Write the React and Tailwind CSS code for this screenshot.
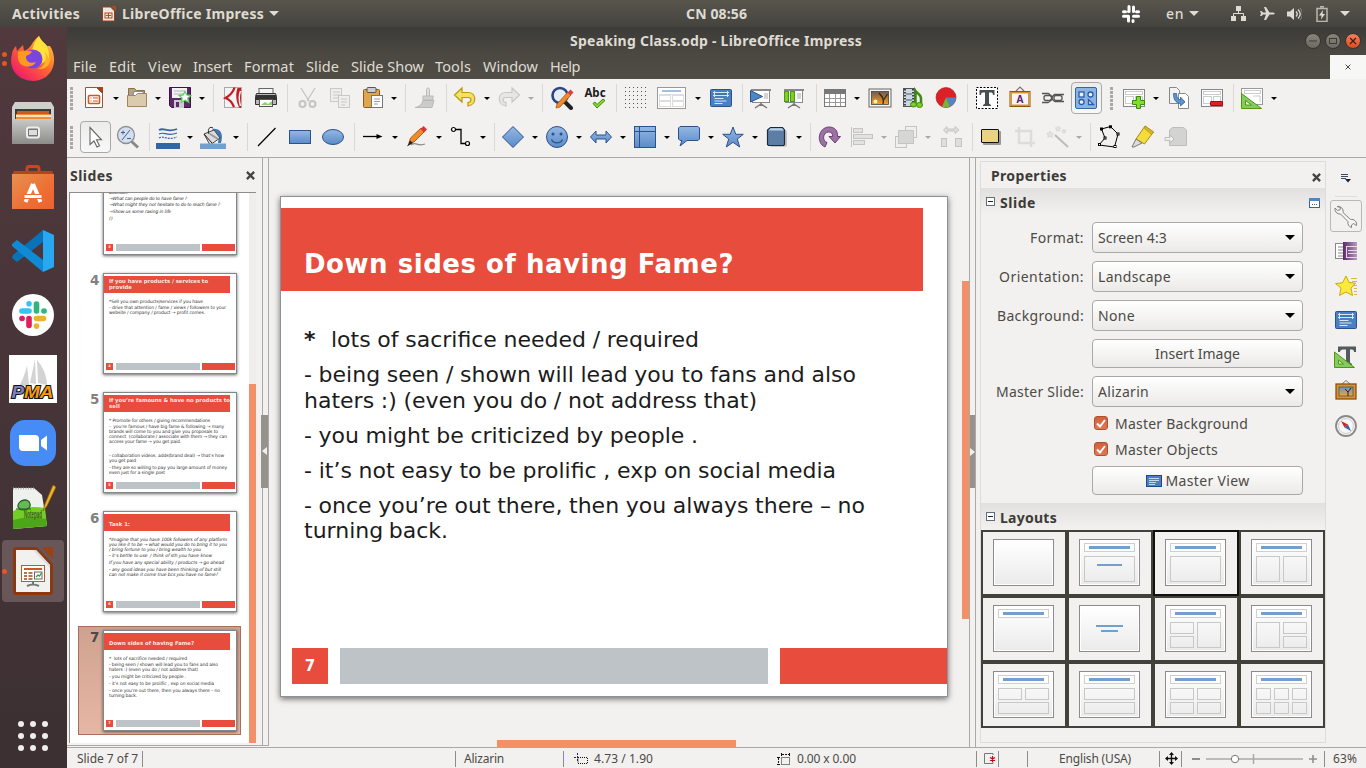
import React, { useLayoutEffect, useRef } from 'react';

/* Text run that fills a given width, by tracking or (with `words`) by word gaps. */
function T({ w, words, children, className = '' }) {
  const ref = useRef(null);
  useLayoutEffect(() => {
    const el = ref.current;
    el.style.letterSpacing = '';
    el.style.wordSpacing = '';
    const natural = el.getBoundingClientRect().width;
    const text = el.textContent;
    if (words) el.style.wordSpacing = (w - natural) / Math.max(1, text.split(' ').length - 1) + 'px';
    else el.style.letterSpacing = (w - natural) / text.length + 'px';
  }, [w, words, children]);
  return <span ref={ref} className={'inline-block shrink-0 whitespace-pre ' + className}>{children}</span>;
}

const Svg = ({ children, className = 'size-6', vb = '0 0 24 24' }) => (
  <svg viewBox={vb} className={'block shrink-0 ' + className} fill="none">{children}</svg>
);

const Tri = ({ className = '' }) => (
  <svg viewBox="0 0 10 5" className={'block shrink-0 ' + className}><path d="M0 0h10L5 5z" fill="currentColor" /></svg>
);

const blue = 'url(#gBlue)';
const bs = '#2a528c';

const icons = {
  doc: <><path d="M3.500 1.500h11l6 6v14h-17z" fill="#fff" stroke="#8a5a3c" /><path d="M14 1h7v7z" fill="#a2451b" /><rect x="6.500" y="9.500" width="11" height="8" rx="1" fill="#fff" stroke="#d2571b" strokeWidth="1.600" /><path d="M8.500 12h1M8.500 15h1M11 12h5M11 15h5" stroke="#d2571b" strokeWidth="1.200" /></>,
  folder: <><path d="M3.500 20V2.500h6l2 2h8V20z" fill="#b5a184" stroke="#85714f" /><path d="M9 5.500h9v8H7z" fill="#fff" stroke="#777" strokeWidth=".8" /><path d="M2.500 9.500h8l2-2h9v13h-19z" fill="#dccbab" stroke="#9c8761" /></>,
  save: <><path d="M1.500 1.500h21v20h-19l-2-2z" fill="#5c2a68" stroke="#3b1446" /><rect x="4" y="2" width="15" height="10" fill="#f2f2f2" /><path d="M6 5h11M6 8h11" stroke="#b5b5b5" /><rect x="6" y="14" width="10" height="8" fill="#ccc" /><rect x="8" y="16" width="3" height="5" fill="#5c2a68" /><path d="M17 5.500l1.800 3.500 4 .5-3 2.800.9 4-3.700-2-3.700 2 .8-4-2.900-2.800 4-.5z" fill="#fff" stroke="#59d35a" strokeWidth="1.300" /></>,
  pdf: <><rect x="3.500" y="1.500" width="17" height="20" fill="#f3f3f3" stroke="#aaa" /><path d="M13.500 1.500C12 7 8 10 4.500 12c4 1.500 7 5 8.500 9" stroke="#c9191e" strokeWidth="2.200" /><path d="M16.500 2H20v20h-1.500c-3-5-4.500-13-2-20" fill="#c9191e" /><path d="M19.500 5c-1.500 4-1.500 10 0 15" stroke="#f3f3f3" strokeWidth="1.500" /></>,
  print: <><rect x="5" y="2.500" width="14" height="7" fill="#f5f5f5" stroke="#666" /><path d="M2.500 7.500h19l1 3v8h-21v-8z" fill="#b8b8b8" stroke="#333" /><rect x="2" y="9" width="20" height="5" fill="#333" /><rect x="5.500" y="13.500" width="13" height="7" fill="#fff" stroke="#555" /><path d="M7 19l4-3 3 2 4-3v4z" fill="#8bcf6b" /></>,
  cut: <g stroke="#c4c4c3" strokeWidth="1.300"><path d="M5 2l8 13M19 2l-8 13" /><circle cx="6.500" cy="18" r="3" strokeWidth="2" /><circle cx="16.500" cy="18" r="3" strokeWidth="2" /></g>,
  copy: <g fill="#efeeed" stroke="#c8c8c6"><rect x="2.500" y="2.500" width="11" height="13" /><path d="M5 6h7M5 9h7M5 12h5" /><rect x="10.500" y="9.500" width="11" height="12" /><path d="M13 13h6M13 16h6M13 19h4" /></g>,
  paste: <><rect x="2.500" y="3.500" width="16" height="18" rx="1" fill="#e0a64e" stroke="#8b5c1f" /><rect x="6" y="1.500" width="9" height="5" rx="1" fill="#ccc" stroke="#555" /><rect x="10.500" y="9.500" width="11" height="12" fill="#fff" stroke="#777" /><path d="M13 13h6M13 15.500h6M13 18h4" stroke="#999" /></>,
  brush: <><path d="M13.500 10V3.500c0-2 3-2 3 0V10" fill="#ddd" stroke="#bbb" /><rect x="10" y="10" width="10" height="4" fill="#d0d0d0" stroke="#bbb" /><path d="M10 14.500c-1 4-4 6.500-8 7h17l2-7z" fill="#cbcbca" stroke="#b9b9b8" /></>,
  undo: <path d="M1.500 9l7.500-7v4.500h6c9 0 9 12.500 0 13.500v-3.500c4-1 4-5 0-5H9v4.500z" fill="#f6e063" stroke="#bb9a12" strokeWidth="1.200" />,
  redo: <path d="M22.500 9l-7.500-7v4.500H9c-9 0-9 12.500 0 13.500v-3.500c-4-1-4-5 0-5h6v4.500z" fill="#e6e6e5" stroke="#c8c8c6" strokeWidth="1.200" />,
  find: <><path d="M14 15l7 7" stroke="#222" strokeWidth="4" strokeLinecap="round" /><circle cx="10" cy="9.500" r="7.500" fill="#e5ecf7" stroke="#2a4484" strokeWidth="2.600" /><path d="M6 22l1-4L18 6l3 3-11 12z" fill="#ef8b2b" stroke="#a8540e" strokeWidth=".8" /><path d="M17.500 6.500l3-3 3 3-3 3z" fill="#e33c3c" /></>,
  abc: <><text x="12" y="10.500" fontSize="11.500" fontWeight="700" textAnchor="middle" fill="#1d1d1d" fontFamily="Noto Sans, sans-serif">Abc</text><path d="M10 17.500l2-1.500 2 2.500 6-5.500 2 1.500-8 7.500z" fill="#86d832" stroke="#3d8b0d" /></>,
  dots: <g fill="#555">{[2, 6, 10, 14, 18, 22].map((y) => [2, 6, 10, 14, 18, 22].map((x) => <rect key={x + '-' + y} x={x} y={y - 1} width="1" height="1" />))}</g>,
  master: <><rect x="1.500" y="3.500" width="21" height="17" rx="1" fill="#4a7fc1" stroke={bs} /><rect x="5.500" y="6" width="13" height="4" fill="#3f74b6" /><path d="M4 6.500h16M4 9.500h16M5.500 5v6M18.500 5v6M5.500 12.500h9M5.500 15h12M5.500 17.500h8" stroke="#d9e6f6" /></>,
  pres1: <><path d="M12 18l-6 4M12 18l6 4M12 16v4" stroke="#777" strokeWidth="1.500" /><rect x="3.500" y="4.500" width="17" height="12" fill="#fff" stroke="#888" /><path d="M2 4h20" stroke="#888" strokeWidth="2" /><path d="M15 8h4M15 10h4M15 12h4" stroke="#aaa" /><path d="M1.500 4.500l12 6-12 5.500z" fill="#4f86c6" stroke={bs} /></>,
  pres2: <><path d="M12 18l-6 4M12 18l6 4M12 16v4" stroke="#777" strokeWidth="1.500" /><rect x="3.500" y="4.500" width="17" height="12" fill="#fff" stroke="#888" /><path d="M2 4h20" stroke="#888" strokeWidth="2" /><path d="M15 8h4M15 10h4M15 12h4" stroke="#aaa" /><rect x="2.500" y="5.500" width="4" height="10" fill="#7dcf28" stroke="#4d9a06" /><rect x="8.500" y="5.500" width="4" height="10" fill="#7dcf28" stroke="#4d9a06" /></>,
  table: <><rect x="1.500" y="3.500" width="21" height="17" fill="#fff" stroke="#777" /><rect x="2" y="4" width="20" height="4" fill="#777" /><path d="M2 12.500h20M2 16.500h20M6.500 8v12M12.500 8v12M17.500 8v12" stroke="#999" /></>,
  image: <><rect x="1" y="3" width="22" height="18" fill="#f4f4f4" stroke="#666" /><rect x="3.500" y="5.500" width="17" height="13" fill="url(#gSun)" stroke="#444" strokeWidth=".8" /><path d="M15 18c1-4 0-5-1-8M15.500 14l4-6M15 12l-4-5" stroke="#3a2712" strokeWidth="1.300" /><circle cx="7.500" cy="15.500" r="2" fill="#fff3b0" /></>,
  media: <><rect x="2.500" y="2.500" width="11" height="18" fill="#cbd9e6" stroke="#555" /><path d="M4 3v17M12 3v17" stroke="#444" strokeWidth="2" strokeDasharray="1.500 1.500" /><path d="M5 8h6M5 14h6" stroke="#555" /><path d="M14.500 18V5c2 3 5 3 5.500 7v7" stroke="#3d8b0d" strokeWidth="2.500" /><ellipse cx="12.500" cy="18.500" rx="3" ry="2.500" fill="#7dcf28" stroke="#3d8b0d" /><ellipse cx="18.500" cy="19" rx="3" ry="2.500" fill="#7dcf28" stroke="#3d8b0d" /></>,
  chart: <><circle cx="12" cy="11.500" r="10" fill="#dd1f26" stroke="#a51217" strokeWidth=".6" /><path d="M12 11.500h10c0 4-3 8-6 9z" fill="#4f86c6" /><path d="M12 11.500l4 9c-3 1.300-6 1-8 0z" fill="#74b53a" /></>,
  textbox: <><rect x="1.500" y="1.500" width="21" height="21" fill="#fff" stroke="#000" strokeDasharray="2 1.500" /><path d="M4.500 4h15v5h-1.500c0-2-1-2.500-2.500-2.500h-1.500v11l2 1.500v1H8v-1l2-1.500v-11H8.500C7 6.500 6 7 6 9H4.500z" fill="#4a4f52" /></>,
  fontwork: <><path d="M8 5l4-4 4 4" stroke="#777" strokeWidth="1.200" /><rect x="2" y="5.500" width="20" height="15" fill="#f7f3f7" stroke="#8b5207" strokeWidth="1" /><rect x="3.200" y="6.700" width="17.600" height="12.600" stroke="#d69233" strokeWidth="1.500" /><text x="12" y="17" fontSize="10" fontWeight="700" textAnchor="middle" fill="#5c2a68" fontFamily="Noto Sans, sans-serif">A</text></>,
  link: <g stroke="#555" strokeWidth="1.300"><path d="M1 7.500h6c3 0 4 8 7 8h9M1 16.500h6c3 0 4-8 7-8h9" /><rect x="3" y="9.500" width="8" height="5" rx="2" /><rect x="13" y="9.500" width="8" height="5" rx="2" /></g>,
  shapes: <><rect x="1.500" y="1.500" width="21" height="21" rx="1.500" fill="#8cb4e2" stroke="#3465a4" /><g fill="#e8f1fb" stroke="#2a5ca8" strokeWidth="1.300"><rect x="5" y="6" width="5" height="5" /><circle cx="16.500" cy="8.500" r="2.500" /><circle cx="7.500" cy="16" r="2.500" /><path d="M14.500 13.500v5h5z" /></g></>,
  newslide: <><rect x="1.500" y="3.500" width="21" height="17" fill="#fff" stroke="#888" /><g stroke="#ccc"><rect x="3.500" y="5.500" width="17" height="3" /><rect x="3.500" y="10.500" width="8" height="7" /><rect x="13.500" y="10.500" width="7" height="7" /></g><path d="M14.500 10.500h4v4h4v4h-4v4h-4v-4h-4v-4h4z" fill="#7de02a" stroke="#3d8b0d" /></>,
  dup: <><path d="M2.500 1.500h7l3 3v13h-10z" fill="#f3f3f3" stroke="#888" /><path d="M11.500 7.500h7l3 3v12h-10z" fill="#fff" stroke="#888" /><path d="M6.500 7.500h3c0 4 1.500 6 4 6.500V11l4.500 5-4.500 4v-2.500c-5-.5-7-4-7-10z" fill="#5b93cf" stroke={bs} strokeWidth=".7" /></>,
  del: <><rect x="1.500" y="3.500" width="21" height="17" fill="#fff" stroke="#888" /><g stroke="#ccc"><rect x="3.500" y="5.500" width="17" height="3" /><rect x="3.500" y="10.500" width="8" height="7" /><rect x="13.500" y="10.500" width="7" height="5" /></g><rect x="10.500" y="15.500" width="12" height="4" rx=".5" fill="#dd1f26" stroke="#9c0f14" /></>,
  ruler: <><rect x="1.500" y="2.500" width="21" height="16" fill="#fff" stroke="#999" /><g stroke="#ccc"><rect x="4.500" y="4.500" width="16" height="3" /><path d="M13 10h7v6" /></g><path d="M1.500 7.500v15h20z" fill="#86c966" stroke="#4d9a06" /><path d="M5.500 14.500v4.500h6z" fill="#f2f1ef" stroke="#4d9a06" /></>,
  select: <path d="M7 2.500v17l4-3.500 3 6 2.500-1.200-3-6h5z" fill="#fff" stroke="#666" strokeWidth="1.100" />,
  zoom: <><path d="M15 16l7 6.500" stroke="#888" strokeWidth="3" /><circle cx="10" cy="10" r="8.500" fill="#d3dfef" stroke="#8b8f94" strokeWidth="1.300" /><path d="M5 7.500h4M7 5.500v4M14 5L6 15M11 13.500h4" stroke="#45648e" /></>,
  linecolor: <><path d="M3 5c5-3 8 3 18-1" stroke="#3465a4" strokeWidth="1.800" /><path d="M3 9c5-3 8 3 18-1" stroke="#3465a4" strokeWidth="1.200" /><path d="M3 13c5-3 8 3 18-1" stroke="#3465a4" strokeWidth="1.200" strokeDasharray="2 1" /><rect x="0" y="18" width="24" height="6" fill="#3465a4" /></>,
  fill: <><path d="M11 4c8-1 12 4 9 14h-3c1-6 1-9-6-14" fill="#3c78b8" /><path d="M3 9l10-4 6 8-10 7z" fill="#dcdcdc" stroke="#444" /><path d="M8 9c-2-5 1-8 4-6M3 9l8 9" stroke="#222" /><path d="M9 9l8 5" stroke="#999" strokeWidth="2" /><rect x="-1" y="18.500" width="26" height="5.500" fill="#729fcf" /></>,
  line: <path d="M3 21L20.500 3" stroke="#000" strokeWidth="1.200" />,
  rect: <rect x="1.500" y="5.500" width="21" height="13" fill={blue} stroke={bs} />,
  ellipse: <ellipse cx="12" cy="12" rx="10.500" ry="7.500" fill={blue} stroke={bs} />,
  arrowline: <><path d="M2 11.500h15" stroke="#000" strokeWidth="1.300" /><path d="M15.500 9l6 2.500-6 2.500z" fill="#000" /></>,
  pencil: <><path d="M6 20c5-4 6 2 14-1" stroke="#888" strokeWidth="1.300" /><path d="M4 18l1.500-5L16 3l3.500 3.500L9 17z" fill="#ef8b2b" stroke="#a8540e" strokeWidth=".9" /><path d="M15.500 4l3-3 3.500 3.500-3 3z" fill="#d33" /><path d="M2 21.500l3-6 3 2.500z" fill="#222" /></>,
  connector: <><path d="M7 4.500h5v14h4" stroke="#000" strokeWidth="1.300" /><circle cx="4.500" cy="4.500" r="2" fill="#fff" stroke="#000" strokeWidth="1.200" /><circle cx="18.500" cy="18.500" r="2" fill="#fff" stroke="#000" strokeWidth="1.200" /></>,
  diamond: <path d="M12 1.500L22.500 12 12 22.500 1.500 12z" fill={blue} stroke={bs} />,
  smile: <><circle cx="12" cy="12" r="10.500" fill={blue} stroke={bs} /><circle cx="8" cy="9" r="1.500" fill={bs} /><circle cx="16" cy="9" r="1.500" fill={bs} /><path d="M6.500 14.500c2 4.500 9 4.500 11 0" stroke={bs} strokeWidth="1.200" /></>,
  arrows: <path d="M1.500 12l5.500-6v4h10V6l5.500 6-5.500 6v-4H7v4z" fill={blue} stroke={bs} />,
  flow: <><rect x="1.500" y="1.500" width="21" height="21" fill={blue} stroke={bs} /><path d="M6.500 2v20M2 6.500h20" stroke={bs} /></>,
  callout: <path d="M3 1.500h18l1.500 1.500v11L21 15.500H10L3 21l2-5.500H3L1.500 14V3z" fill={blue} stroke={bs} />,
  star: <path d="M12 2l2.800 7.300h7.500l-6 4.700 2.400 8L12 17.300 5.300 22l2.400-8-6-4.700h7.500z" fill={blue} stroke={bs} />,
  cube: <><rect x="5" y="5" width="17" height="17" rx="2" fill="#c4c4c4" /><path d="M5.500 2.500h12l2 2.500v14.500l-1 1h-15l-1-1V5z" fill="#5c7ea4" stroke="#1b2a3c" strokeWidth="1.200" /><path d="M3.500 5.500l2-2.300h11.500l2 2.300z" fill="#b8d0ea" /></>,
  rotate: <path d="M8 22C-1 18 1 3 11.500 2 18 1.800 21 6 20.500 11.500h3L18 18l-6-6.500h3.500c.5-3-1.500-4.700-4-4.500C5.500 7.500 5 16 10 17.500z" fill="#9b72a3" stroke="#6b3f75" />,
  align: <g fill="#e2e2e1" stroke="#c4c4c2"><path d="M1.500 2v20" /><rect x="3.500" y="3.500" width="9" height="4" /><rect x="3.500" y="9.500" width="19" height="4" /><rect x="3.500" y="15.500" width="11" height="4" /></g>,
  arrange: <g fill="#f0efee" stroke="#c4c4c2"><rect x="11.500" y="1.500" width="11" height="11" /><rect x="1.500" y="11.500" width="11" height="11" /><rect x="4.500" y="5.500" width="15" height="13" fill="#d6d6d5" /></g>,
  dist: <g fill="#dededd" stroke="#c4c4c2"><rect x="2.500" y="13.500" width="5" height="8" /><rect x="16.500" y="13.500" width="6" height="8" /><path d="M4.500 5l3.500-3.500v2.500h8V1.500L20 5l-4 3.500V6H8v2.500z" /></g>,
  shadow: <><rect x="4" y="6" width="18" height="14" rx="1" fill="#999" /><rect x="2.500" y="4.500" width="17" height="13" rx=".5" fill="#e9d282" stroke="#111" /></>,
  crop: <g stroke="#dddcda" strokeWidth="2.500"><path d="M6 2v16h16M2 6h16v16" /></g>,
  wand: <><path d="M9 10l13 12" stroke="#bcbcba" strokeWidth="2" /><g fill="#e3e3e2" stroke="#d3d3d1" strokeWidth=".7"><path d="M4 6l1 2 2.500.4-1.700 1.700.4 2.400L4 11.300l-2.200 1.200.4-2.400L.5 8.400 3 8z" /><path d="M12 1l.8 1.700 2 .2-1.500 1.300.5 2-1.800-1-1.800 1 .5-2L9.200 3l2-.2zM18 4l.7 1.300 1.500.2-1 1 .2 1.500L18 7.300 16.600 8l.2-1.500-1-1 1.500-.2z" /></g></>,
  points: <><path d="M4.500 4l9-2.500 7.500 7.500-3.500 13L2 20l6-7z" stroke="#000" /><g fill="#fff" stroke="#000"><rect x="3.500" y="3" width="2" height="2" /><rect x="12.500" y=".8" width="2" height="2" /><rect x="20" y="8" width="2" height="2" /><rect x="17" y="20.500" width="2" height="2" /><rect x="1.500" y="18.500" width="2" height="2" /><rect x="7" y="12" width="2" height="2" /></g></>,
  glue: <><path d="M14 1l8.500 6-9 12-8.500-5z" fill="#f3dc3c" stroke="#a88b12" /><path d="M14 1l8.500 6-2 2.500-7-6z" fill="#d9b72a" stroke="#a88b12" strokeWidth=".7" /><path d="M5 14l6 4-8 4H1z" fill="#ddd" stroke="#777" /></>,
  toggle: <><path d="M5.500 5l3-2.500h11l3 2.500v15.500h-17z" fill="#d3d3d2" stroke="#bdbdbc" /><path d="M1 12.500h5V10l4 4-4 4v-2.500H1z" fill="#eee" stroke="#bdbdbc" /></>,
  wrench: <g transform="scale(-1 1) translate(-24 0)"><path d="M21 2.500a5 5 0 0 0-6 6L7.500 15.500a5 5 0 0 0-6 6l3-2 2 1.500v2.500a5 5 0 0 0 3.500-6L17.500 10a5 5 0 0 0 5.500-6l-2.500 2.500-2.500-.7-.5-2.300z" fill="#f5f5f4" stroke="#82817d" /></g>,
  trans: <><rect x="1.500" y="4.500" width="10" height="15" fill="#fff" stroke="#888" /><path d="M4 8h6M4 11h6M4 14h6M4 17h6" stroke="#888" /><rect x="9" y="3" width="14" height="18" fill="url(#gPurple)" /><path d="M12.500 7v11M12 7.500h11M14 11.500h9M14 14.500h9M12 18.500h11" stroke="#e7d8ea" /></>,
  anim: <><path d="M17 4.500h6M18 7.500h5M20 11.500h3M20 14.500h3M20 17.500h3M20 20.500h3" stroke="#d8b93c" strokeWidth="1.200" /><path d="M12 2l3 6.500 6.500.7-4.500 5 1.500 7.300-6.500-3.500-6.500 3.500 1.500-7.500L1.500 9.500l7-.7z" fill="#fbe93b" stroke="#c9a916" /></>,
  styles: <><path d="M4 1.500h18V7h-2c0-2-1-2.500-4-2.500v13l2 1.500v1h-8v-1l2-1.500v-13h-2C8 4.500 6 5 6 7H4z" fill="#555a5c" /><path d="M.5 7v15.500h20z" fill="#86c966" stroke="#4d9a06" /><path d="M4.500 15v4h5z" fill="#d9f0cc" stroke="#4d9a06" /></>,
  gallery: <><path d="M8 5l4-3.500L16 5" stroke="#777" /><rect x="2" y="5" width="20" height="15" fill="#d69233" stroke="#8b5207" strokeWidth="1.300" /><rect x="5" y="8" width="14" height="9" fill="url(#gSky)" stroke="#555" strokeWidth=".8" /><path d="M14 17v-4l3-4M14 13l-3-3" stroke="#2a2015" /></>,
  nav: <><circle cx="12" cy="12" r="10" fill="#f7f7f7" stroke="#888" strokeWidth="1.800" /><circle cx="12" cy="12" r="7.500" stroke="#ccc" /><path d="M7 7l7 3.500-3.500 3z" fill="#d22" /><path d="M17 17l-3-6.500-3.500 3z" fill="#3465a4" /></>,
};

const Sheet = () => (
  <svg viewBox="0 0 29 22" className="ml-[10px] block h-[22px] w-[29px] shrink-0">
    <rect x=".5" y=".5" width="28" height="21" fill="#fff" stroke="#999" />
    <path d="M5 4h19" stroke="#9fbfe3" strokeWidth="2" />
    <g fill="none" stroke="#ddd"><path d="M2 7.500h25" /><rect x="2.500" y="8.500" width="11" height="5" /><rect x="15.500" y="8.500" width="11" height="5" /><rect x="2.500" y="14.500" width="11" height="5" /><rect x="15.500" y="14.500" width="11" height="5" /></g>
  </svg>
);

function Item({ k, m }) {
  if (k === 'handle') return <div className={'h-[23px] w-[3px] mr-px shrink-0 bg-[repeating-linear-gradient(#aaa9a7_0_3px,transparent_3px_4px)] ' + m} />;
  if (k === '|') return <div className={'h-7 w-px shrink-0 bg-[#d9d8d6] ' + m} />;
  if (k === 'd' || k === 'dx') return <div className={'flex w-[18px] shrink-0 justify-center ' + m}><Tri className={'h-[3px] w-[6px] ' + (k === 'd' ? 'text-black' : 'text-[#aaa9a7]')} /></div>;
  if (k === 'sheet') return <Sheet />;
  if (k[0] === '!') return <div className={'flex h-8 w-[31px] shrink-0 items-center justify-center rounded-[4px] border-[1.500px] border-[#aaa9a7] bg-linear-to-b from-[#ececeb] to-[#f8f8f8] pr-px ' + m}><Svg>{icons[k.slice(1)]}</Svg></div>;
  return <Svg className={'size-6 ' + m}>{icons[k]}</Svg>;
}

const row1 = [
  ['handle', 'ml-[3px]'], ['doc', 'ml-[8px]'], ['d', 'ml-px'], ['folder', ''], ['d', ''], ['save', 'ml-px'], ['d', 'ml-px'], ['|', 'ml-[2px]'],
  ['pdf', 'ml-[7px]'], ['print', 'ml-[9px]'], ['|', 'ml-[9px]'], ['cut', 'ml-[8px]'], ['copy', 'ml-[8px]'], ['paste', 'ml-[9px]'], ['d', ''], ['|', 'ml-[2px]'],
  ['brush', 'ml-[7px]'], ['|', 'ml-[9px]'], ['undo', 'ml-[6px]'], ['d', 'ml-px'], ['redo', 'ml-px'], ['dx', 'ml-px'], ['|', 'ml-[2px]'],
  ['find', 'ml-[7px]'], ['abc', 'ml-[9px]'], ['|', 'ml-[9px]'], ['dots', 'ml-[6px]'], ['sheet', ''], ['d', 'ml-[3px]'], ['master', 'ml-[2px]'], ['|', 'ml-[9px]'],
  ['pres1', 'ml-[6px]'], ['pres2', 'ml-[9px]'], ['|', 'ml-[10px]'], ['table', 'ml-[6px]'], ['d', 'ml-px'], ['image', 'ml-[2px]'], ['media', 'ml-[9px]'], ['chart', 'ml-[9px]'], ['|', 'ml-[9px]'],
  ['textbox', 'ml-[7px]'], ['fontwork', 'ml-[9px]'], ['link', 'ml-[9px]'], ['!shapes', 'ml-[6px]'], ['handle', 'ml-[8px]'], ['newslide', 'ml-[8px]'], ['d', 'ml-px'],
  ['dup', 'ml-[2px]'], ['del', 'ml-[9px]'], ['|', 'ml-[9px]'], ['ruler', 'ml-[6px]'], ['d', 'ml-px'],
];
const row2 = [
  ['handle', 'ml-[3px]'], ['!select', 'ml-[6px]'], ['zoom', 'ml-[5px]'], ['|', 'ml-[9px]'], ['linecolor', 'ml-[6px]'], ['d', 'ml-px'], ['fill', 'ml-[2px] overflow-visible'], ['d', 'ml-[2px]'], ['|', 'ml-[2px]'],
  ['line', 'ml-[7px]'], ['rect', 'ml-[9px]'], ['ellipse', 'ml-[9px]'], ['|', 'ml-[9px]'], ['arrowline', 'ml-[6px]'], ['d', 'ml-px'], ['pencil', 'ml-px'], ['d', 'ml-px'], ['connector', 'ml-px'], ['d', 'ml-px'], ['|', 'ml-[2px]'],
  ['diamond', 'ml-[6px]'], ['d', 'ml-px'], ['smile', 'ml-px'], ['d', 'ml-px'], ['arrows', 'ml-px'], ['d', 'ml-px'], ['flow', 'ml-px'], ['d', 'ml-px'], ['callout', 'ml-px'], ['d', 'ml-px'], ['star', 'ml-px'], ['d', 'ml-px'], ['cube', 'ml-px'], ['d', 'ml-px'], ['|', 'ml-[2px]'],
  ['rotate', 'ml-[6px]'], ['align', 'ml-[9px]'], ['dx', 'ml-px'], ['arrange', 'ml-px'], ['dx', 'ml-px'], ['dist', 'ml-[2px]'], ['|', 'ml-[9px]'],
  ['shadow', 'ml-[6px]'], ['crop', 'ml-[10px]'], ['wand', 'ml-[9px]'], ['dx', ''], ['|', 'ml-[2px]'], ['points', 'ml-[6px]'], ['glue', 'ml-[10px]'], ['toggle', 'ml-[9px]'],
];

const Close = ({ className = 'size-[8px]', sw = 2 }) => (
  <svg viewBox="0 0 8 8" className={'block shrink-0 ' + className}><path d="M.8.8l6.400 6.400M7.200.8L.8 7.200" stroke="#45433f" strokeWidth={sw} /></svg>
);

/* ---------- top of the screen ---------- */
function TopBar() {
  return (
    <div className="flex h-[27px] items-center bg-linear-to-b from-[#58554d] to-[#44433e] text-[14px] font-bold text-[#dfdbd2]">
      <T w={68} className="ml-[12px]">Activities</T>
      <Svg className="ml-[21px] h-4 w-[15px]" vb="0 0 15 16"><path d="M1.500 1h8l4 4v10h-12z" fill="#f3e6df" stroke="#91401f" /><path d="M10 0h5v5z" fill="#b4481c" /><rect x="4" y="7" width="7" height="5" stroke="#b4481c" /><path d="M5 9.500h5M7.500 7v5" stroke="#b4481c" /></Svg>
      <T w={142} className="ml-[6px]">LibreOffice Impress</T>
      <Tri className="ml-[5px] h-[5px] w-[10px]" />
      <T w={61} className="ml-[407px]">CN 08:56</T>
      <Svg className="ml-[374px] size-5" vb="0 0 20 20"><g stroke="#fff" strokeWidth="3" strokeLinecap="round"><path d="M8 2.500v5M2.500 7.700h2M12.500 3v4.500M15.500 7.700h2M2.500 12.300h5M12.500 12.300h5M7.500 12.500V17M12 16.500v1M7.500 7.600h.1" /></g></Svg>
      <T w={18} className="ml-[25px] font-medium">en</T>
      <Tri className="ml-[5px] h-[5px] w-[10px]" />
      <Svg className="ml-[32px] size-[15px]" vb="0 0 15 15"><path d="M5 0h5v5H5zM0 10h5v5H0zM10 10h5v5h-5z" fill="#dfdbd2" /><path d="M7.500 5v3M2.500 10V7.500h10V10" stroke="#dfdbd2" /></Svg>
      <Svg className="ml-[14px] size-[15px]" vb="0 0 15 15"><path d="M15 7.500l-1.500 1H9.500L6 14H4l2-5.500H3L1.500 10H0l1-2.500L0 5h1.500L3 6.500h3L4 1h2l3.500 5.500h4z" fill="#dfdbd2" /></Svg>
      <Svg className="ml-[11px] size-4" vb="0 0 16 16"><path d="M1 5.500h3L8 2v12L4 10.500H1z" fill="#dfdbd2" /><path d="M10 5.500c1.500 1.500 1.500 3.500 0 5M12 3.500c3 3 3 6 0 9" stroke="#dfdbd2" strokeWidth="1.300" /><path d="M14 2c3 3 3 9 0 12" stroke="#8b8880" /></Svg>
      <Svg className="ml-[14px] h-4 w-3" vb="0 0 12 16"><path d="M4 .7h4M1 2.500h10v13H1z" stroke="#bcb8af" strokeWidth="1.500" /><path d="M7 4L3 9.500h2.500L5 13.500 9 8H6.500z" fill="#dfdbd2" /></Svg>
      <Tri className="ml-[12px] h-[5px] w-[10px]" />
    </div>
  );
}

function WinBtn({ children, close }) {
  return <div className={'flex size-4 items-center justify-center rounded-full border border-[#35342f] ' + (close ? 'bg-linear-to-b from-[#f2805c] to-[#df4a16]' : 'bg-linear-to-b from-[#888479] to-[#6c6a62]')}><Svg className="size-[14px]" vb="0 0 14 14">{children}</Svg></div>;
}

const menus = [['File', 24, 'ml-[6px]'], ['Edit', 27, 'ml-[12px]'], ['View', 34, 'ml-[12px]'], ['Insert', 39, 'ml-[11px]'], ['Format', 50, 'ml-[12px]'], ['Slide', 33, 'ml-[12px]'], ['Slide Show', 73, 'ml-[12px]'], ['Tools', 36, 'ml-[11px]'], ['Window', 55, 'ml-[12px]'], ['Help', 30, 'ml-[12px]']];

function TitleAndMenu() {
  return (
    <div className="flex h-[52px] flex-col bg-linear-to-b from-[#3c3b37] via-[#4b4842] to-[#504d46] text-[#dfdbd2]">
      <div className="flex h-[28px] items-center pb-px">
        <T w={292} className="ml-[503px] text-[14px] font-bold">Speaking Class.odp - LibreOffice Impress</T>
        <div className="ml-[443px] flex gap-1">
          <WinBtn><path d="M3 7h8" stroke="#3c3b37" /></WinBtn>
          <WinBtn><rect x="3.500" y="4.500" width="7" height="5" stroke="#3c3b37" /></WinBtn>
          <WinBtn close><path d="M4 4l6 6M10 4l-6 6" stroke="#3c2015" strokeWidth="1.300" /></WinBtn>
        </div>
      </div>
      <div className="flex h-[24px] items-center text-[14.500px]">
        {menus.map(([t, w, m]) => <T key={t} w={w} className={m}>{t}</T>)}
        <div className="ml-auto flex h-full w-9 items-center justify-center bg-[#f7f7f6]"><Close className="size-[6px]" sw={1.300} /></div>
      </div>
    </div>
  );
}

/* ---------- dock ---------- */
const Cell = ({ children, active }) => <div className={'flex size-[62px] shrink-0 items-center justify-center rounded-[4px] ' + (active ? 'bg-[#685659]' : '')}>{children}</div>;

function Dock() {
  return (
    <div className="relative flex w-[67px] shrink-0 flex-col items-start gap-[2px] bg-linear-to-b from-[#51393d] to-[#3c3033] pl-[2px] pt-px">
      <Cell><Svg className="-mt-[2px] size-[46px]" vb="0 0 46 46">
        <path d="M29 1c2 5 5 6 8 10l3 0c9 14 3 34-16 35C7 46-2 33 2 19c0-3 2-6 4-8l1 5 6-6 1 6c8-3 7-9 15-15z" fill="url(#gFox)" />
        <path d="M29 1c2 5 5 6 8 10 2 5 2 8 2 12l-10 8-7-15c1-6 3-10 7-15z" fill="#ffe13d" />
        <circle cx="23" cy="24" r="9.500" fill="#7a45df" /><path d="M8 17c5-3 10 0 14-1-1 4-6 4-6 6 0 5 5 7 10 5-4 7-16 6-18-3z" fill="#ff9a1f" />
        <path d="M34 14c4 9 1 18-6 20 9 1 14-6 12-15l-1 5z" fill="#ffb327" />
      </Svg></Cell>
      <Cell><Svg className="h-11 w-[42px]" vb="0 0 42 44"><path d="M3 1h36l3 5v37H0V6z" fill="#cfcfcd" /><rect x="3" y="8" width="36" height="12" fill="#3f3a37" /><path d="M5 10h32v3H5z" fill="#d2571b" /><path d="M4 13h35v6H4z" fill="#f08a3c" /><path d="M4 14h35v2H4z" fill="#fbe1bd" /><rect y="18" width="42" height="25" fill="url(#gGrey)" /><rect x="15" y="26.500" width="12" height="10" rx="2" stroke="#eee" strokeWidth="2" fill="#777" /><rect x="17" y="29" width="8" height="5" fill="#ddd" /></Svg></Cell>
      <Cell><Svg className="-mt-px h-11 w-[42px]" vb="0 0 42 44"><path d="M15 14V4q0-2.500 2-2.500h8q2 0 2 2.500v10" stroke="#c9471b" strokeWidth="3" /><path d="M2 6h38l2 4H0z" fill="#b2451f" /><rect y="9" width="42" height="35" fill="url(#gOrange)" /><path d="M21 19l-7.500 18M21 19l7.500 18" stroke="#fff" strokeWidth="4" /><rect x="12" y="29.500" width="18" height="4" fill="#fff" stroke="#ec6b32" /></Svg></Cell>
      <Cell><Svg className="size-[42px]" vb="0 0 42 42"><path d="M31 0l11 5v32l-11 5z" fill="#29a8f2" /><path d="M31 0v12L5 32l-5-4 1-3z" fill="#0a73b8" /><path d="M0 14l5-4 26 20v12L0 16z" fill="#118ad6" /></Svg></Cell>
      <Cell><Svg className="size-[42px]" vb="0 0 42 42"><circle cx="21" cy="21" r="21" fill="#fff" /><g strokeWidth="5.600" strokeLinecap="round"><path d="M10 17h7" stroke="#36c5f0" /><path d="M17 9.700v.1" stroke="#36c5f0" /><path d="M24.500 10v7" stroke="#2eb67d" /><path d="M32 17h.1" stroke="#2eb67d" /><path d="M24.500 24.500h7" stroke="#ecb22e" /><path d="M24.500 32v.1" stroke="#ecb22e" /><path d="M17 24.500v7" stroke="#e01e5a" /><path d="M10 24.500h.1" stroke="#e01e5a" /></g></Svg></Cell>
      <Cell><Svg className="size-12" vb="0 0 48 48"><rect width="48" height="48" fill="#fff" /><path d="M9 32c4-4 8-16 9-22l2 20zM21 28l5-24 1 25zM28 5c6 7 10 16 10 25l-9-2z" fill="#d3d3d3" /><text x="2.500" y="43" fontSize="17" fontStyle="italic" fontWeight="700" fontFamily="Liberation Sans, sans-serif" stroke="#111" strokeWidth="2" paintOrder="stroke" textLength="42" lengthAdjust="spacingAndGlyphs"><tspan fill="#7a81bd">P</tspan><tspan fill="#f59c0b">MA</tspan></text></Svg></Cell>
      <Cell><Svg className="size-[46px]" vb="0 0 46 46"><rect width="46" height="46" rx="15" fill="#478cf6" /><path d="M9 15h16q4 0 4 4v12H13q-4 0-4-4zM31 20l6-4.500v15L31 26z" fill="#fff" /></Svg></Cell>
      <Cell><Svg className="h-[46px] w-[46px]" vb="0 0 46 46"><path d="M3 4h21l8 7 5 31-34 3z" fill="#eef1ec" /><path d="M3 27q14-6 32-3l2 18-34 3z" fill="#74cc28" /><path d="M3 36q17-5 33-1l1 7-34 3z" fill="#318d0e" opacity=".6" /><path d="M3 4.500h21" stroke="#aaa" strokeWidth="2" strokeDasharray="1 1.500" /><path d="M8 23c-1-7 11-10 12-3 1 6-9 8-12 3" stroke="#265f24" strokeWidth="1.300" fill="#66b953" /><path d="M6 25h15" stroke="#265f24" /><text x="14" y="34" fontSize="10" fontWeight="700" fill="#3d5e20" fontFamily="Liberation Sans, sans-serif" textLength="18" lengthAdjust="spacingAndGlyphs">Notepad</text><path d="M33 27l2-7L43 1l3 2-9 19z" fill="#f0b323" stroke="#8a5a10" strokeWidth=".7" /></Svg></Cell>
      <Cell active><Svg className="h-12 w-10" vb="0 0 40 48"><path d="M3 0h21l16 17v28q0 3-3 3H3q-3 0-3-3V3q0-3 3-3z" fill="#8b3a10" /><path d="M28 0h12v12z" fill="#9c4212" /><path d="M3 3h20l14 15v27H3z" fill="#f1f1ef" /><path d="M23 3l14 15v3L20 3z" fill="#ddd" /><rect x="8.500" y="18.500" width="23" height="16" fill="#fff" stroke="#c25a20" /><path d="M11 22h18" stroke="#d2571b" strokeWidth="2" /><path d="M11 26h3M11 29h3M11 32h3M15.500 26h4M15.500 29h4M15.500 32h4" stroke="#a2451b" strokeWidth="1.700" /><rect x="21.500" y="25" width="7.500" height="7" fill="#fff" stroke="#666" /><path d="M23 30l2-2 1.500 1 2-3" stroke="#3a9a3a" strokeWidth="1.300" /><path d="M20 35v3M14 39q6-3 12 0" stroke="#777" strokeWidth="2" /></Svg></Cell>
      <div className="mt-auto mb-[17px] ml-[16px] grid grid-cols-3 gap-[6px]">
        {Array.from({ length: 9 }, (_, i) => <span key={i} className="size-[6px] rounded-full bg-[#eeeeec]" />)}
      </div>
      <span className="absolute top-[25px] left-[2px] size-[5px] rounded-full bg-[#e95420]" />
      <span className="absolute top-[34px] left-[2px] size-[5px] rounded-full bg-[#e95420]" />
      <span className="absolute top-[542px] left-[2px] size-[5px] rounded-full bg-[#e95420]" />
    </div>
  );
}

/* ---------- slide list ---------- */
const slides = [
  { n: 3, it: true, title: [], body: [['attention.', 19, 39.700], ['→What can people do to have fame ?', 78, 45.300], ['→What might they not hesitate to do to reach fame ?', 111, 51.700], ['→Show us some rasing in life', 62, 58.300], ['()', 4, 65]] },
  { n: 4, title: [['If you have products / services to', 99, 9], ['provide', 23, 15]], body: [['*Sell you own products/services if you have', 94, 29.500], ['- drive that attention / fame / views / followers to your', 117, 35.300], ['website / company / product → profit comes.', 96, 40.700]] },
  { n: 5, title: [['If you’re famouns & have no products to', 121, 9], ['sell', 11, 15.300]], body: [['* Promote for others / giving recommendations', 101, 29.300], ['-  you’re famous / have big fame & following → many', 115, 35.300], ['brands will come to you and give you proposals to', 109, 40.700], ['connect  (collaborate / associate with them → they can', 118, 45.500], ['access your fame → you get paid.', 72, 50.500], ['- collaboration videos, adds(brand deal) → that’s how', 115, 64.700], ['you get paid', 27, 69.800], ['- they are so willing to pay you large amount of money', 118, 76.700], ['even just for a single post', 56, 81.700]] },
  { n: 6, it: true, title: [['Task 1:', 21, 14]], body: [['*Imagine that you have 100k followers of any platform', 118, 29.300], ['you like it to be → what would you do to bring it to you', 118, 34.500], ['/ bring fortune to you / bring wealth to you', 92, 39.700], ['- it’s bettle to use  / think of sth you have know', 103, 45.300], ['If you have any special ability / products → go ahead', 115, 52.300], ['- any good ideas you have been thinking of but still', 112, 59.300], ['can not make it come true bcs you have no fame?', 109, 64.700]] },
  { n: 7, title: [['Down sides of having Fame?', 85, 14]], body: [['*  lots of sacrifice needed / required', 78, 29.300], ['- being seen / shown will lead you to fans and also', 109, 35.500], ['haters :) (even you do / not address that)', 89, 40.700], ['- you might be criticized by people .', 77, 47.300], ['- it’s not easy to be prolific , exp on social media', 105, 54.300], ['- once you’re out there, then you always there – no', 111, 61.300], ['turning back.', 28, 66.700]] },
];

/* Stacks lines so that each one is centred on its own y. */
function Lines({ rows, top, className }) {
  let prev = top;
  return rows.map(([t, w, c], i) => {
    const mt = c - 2.5 - prev;
    prev = c + 2.5;
    return <div key={i} className={'flex h-[5px] items-center ' + className} style={{ marginTop: mt }}><T w={w}>{t}</T></div>;
  });
}

function Thumb({ s }) {
  return (
    <div className="flex h-[101px] w-[134px] flex-col border border-[#84878a] bg-white shadow-[0_1px_3px_rgba(0,0,0,0.6)]">
      <div className="mt-[2px] h-[17px] w-[126px] shrink-0 bg-[#e74c3c] pl-[5px]"><Lines rows={s.title} top={3} className="text-[5.300px] font-bold text-[#fde9e6]" /></div>
      <div className="h-[70px] shrink-0 pl-[5px]"><Lines rows={s.body} top={20} className={'text-[4.500px] text-[#333] ' + (s.it ? 'italic' : '')} /></div>
      <div className="flex h-[7px] shrink-0 gap-[2px] px-px pl-[2px]">
        <div className="flex w-[7px] items-center justify-center bg-[#e74c3c] text-[3.500px] font-bold text-white">{s.n}</div>
        <div className="ml-px w-[84px] bg-[#bdc3c7]" />
        <div className="flex-1 bg-[#e74c3c]" />
      </div>
    </div>
  );
}

function SlidePane() {
  return (
    <div className="flex w-[202px] shrink-0 flex-col">
      <div className="flex h-[589px] border-t border-r border-b border-[#aaa9a7]">
        <div className="flex w-[196px] shrink-0 flex-col border-r border-[#aaa9a7]">
          <div className="flex h-[34px] items-center pl-[3px]">
            <T w={43} className="text-[14px] font-bold text-[#3c3b37]">Slides</T>
            <Close className="ml-auto mr-[7px] size-[9px]" />
          </div>
          <div className="ml-[2px] flex h-[551px] w-[187px] overflow-hidden border-t border-l border-[#8f8d89] bg-white">
            <div className="flex w-[179px] shrink-0 flex-col gap-[10px] overflow-hidden pl-[8px] font-[DejaVu_Sans,sans-serif]">
              {slides.map((s, i) => (
                <div key={s.n} className={'flex h-[109px] w-[163px] shrink-0 ' + (i === 0 ? '-mt-[43px] ' : '') + (s.n === 7 ? 'bg-linear-to-b from-[#cfa28f] to-[#e6b7a5] outline outline-1 -outline-offset-1 outline-[#a5705c]' : '')}>
                  <div className={'w-[25px] pl-[12px] text-[13.500px] leading-[22px] font-bold ' + (s.n === 7 ? 'text-[#4a4a4a]' : 'text-[#808284]')}>{i > 0 && <T w={9}>{String(s.n)}</T>}</div>
                  <div className="pt-1"><Thumb s={s} /></div>
                </div>
              ))}
            </div>
            <div className="flex w-[7px] flex-col bg-[#efeeec]"><div className="mt-[191px] flex-1 bg-[#f29069]" /></div>
          </div>
        </div>
        <div className="-ml-[2px] flex w-[7px] shrink-0 flex-col justify-center">
          <div className="mb-px flex h-[73px] items-center justify-center bg-[#96938e]"><svg viewBox="0 0 5 8" className="h-2 w-[5px]"><path d="M5 0v8L0 4z" fill="#f2f1ef" /></svg></div>
        </div>
      </div>
    </div>
  );
}

/* ---------- editing area ---------- */
const body = [
  ['- being seen / shown will lead you to fans and also', 552, 'mt-[9px]'], ['haters :) (even you do / not address that)', 453, ''],
  ['- you might be criticized by people .', 394, 'mt-[9px]'], ['- it’s not easy to be prolific , exp on social media', 532, 'mt-[9px]'],
  ['- once you’re out there, then you always there – no', 561, 'mt-[9px]'], ['turning back.', 144, '-mt-px'],
];

function Canvas() {
  return (
    <div className="flex w-[700px] shrink-0 flex-col">
      <div className="flex flex-1 border-t border-[#aaa9a7]">
        <div className="ml-[11px] mt-[38px] flex h-[501px] w-[668px] shrink-0 flex-col border border-[#8e9196] bg-white font-[DejaVu_Sans,sans-serif] shadow-[0_2px_6px_rgba(0,0,0,0.55)]">
          <div className="mt-[11px] flex h-[83px] w-[642px] bg-[#e74c3c] pl-[23px] pt-[40px] text-[26px] leading-[32px] font-bold text-white"><T w={430}>Down sides of having Fame?</T></div>
          <div className="flex h-[357px] flex-col pl-[23px] pt-[36px] text-[22px] leading-[26px] text-[#1c1c1c]">
            <div className="flex h-[26px]"><T w={27} className="font-bold">* </T><T words w={368}>lots of sacrifice needed / required</T></div>
            {body.map(([t, w, m]) => <div key={t} className={'flex h-[26px] ' + m}><T words w={w}>{t}</T></div>)}
          </div>
          <div className="flex h-[36px]">
            <div className="ml-[11px] flex w-[36px] items-center justify-center bg-[#e74c3c] text-[15px] font-bold text-white">7</div>
            <div className="ml-[12px] w-[428px] bg-[#bdc3c7]" />
            <div className="ml-[12px] flex-1 bg-[#e74c3c]" />
          </div>
        </div>
        <div className="ml-auto mt-[123px] h-[338px] w-[7px] bg-[#f29069]" />
      </div>
      <div className="ml-[228px] h-[7px] w-[239px] bg-[#f29069]" />
    </div>
  );
}

/* ---------- sidebar ---------- */
const Select = ({ label, value, lw, vw, m }) => (
  <div className={'flex h-[31px] items-center ' + m}>
    <div className="flex w-[111px] justify-end pr-[8px]"><T w={lw}>{label}</T></div>
    <div className="flex h-[31px] w-[211px] items-center rounded-[4px] border border-[#aaa9a7] bg-linear-to-b from-white to-[#ebeae8] pl-[5px] pr-[7px]"><T w={vw}>{value}</T><Tri className="ml-auto h-[5px] w-[10px] text-black" /></div>
  </div>
);
const Button = ({ children, m }) => <div className={'ml-[111px] flex h-[29px] w-[211px] items-center justify-center gap-[4px] rounded-[4px] border border-[#aaa9a7] bg-linear-to-b from-white to-[#ebeae8] ' + m}>{children}</div>;
const Check = ({ label, w, m }) => (
  <div className={'ml-[113px] flex h-[14px] items-center ' + m}>
    <div className="flex size-[14px] items-center justify-center rounded-[3px] border border-[#b0502f] bg-linear-to-b from-[#d2603a] to-[#e07a52]"><svg viewBox="0 0 10 9" className="h-[9px] w-[10px]"><path d="M1 4.500l3 3L9 1" stroke="#fff" strokeWidth="2" fill="none" /></svg></div>
    <T w={w} className="ml-[7px]">{label}</T>
  </div>
);
const Section = ({ label, w, children }) => (
  <div className="flex h-[26px] items-center bg-linear-to-b from-[#e1e0de] to-[#f2f1ef] pl-[5px] pr-[5px]">
    <svg viewBox="0 0 9 9" className="size-[9px]"><rect x=".5" y=".5" width="8" height="8" fill="#fff" stroke="#5e6e7d" /><path d="M2 4.500h5" stroke="#222" /></svg>
    <T w={w} className="ml-[5px] mt-[3px] font-bold text-[#3c3b37]">{label}</T>
    {children}
  </div>
);

/* placeholder boxes of each layout: [x, y, w, h] inside a 61x47 sheet */
const L = 5, R = 32;
const layouts = [
  { none: true }, { b: [[5, 17, 51, 26]], mid: true }, { b: [[5, 17, 51, 26]], sel: true }, { b: [[L, 17, 24, 26], [R, 17, 24, 26]] },
  { b: [] }, { none: true, center: true }, { b: [[L, 17, 24, 12], [L, 31, 24, 12], [R, 17, 24, 26]] }, { b: [[L, 17, 24, 26], [R, 17, 24, 12], [R, 31, 24, 12]] },
  { b: [[L, 17, 24, 12], [R, 17, 24, 12], [5, 31, 51, 12]] }, { b: [[5, 17, 51, 12], [5, 31, 51, 12]] }, { b: [[L, 17, 24, 12], [R, 17, 24, 12], [L, 31, 24, 12], [R, 31, 24, 12]] },
  { b: [[5, 17, 15, 12], [23, 17, 15, 12], [41, 17, 15, 12], [5, 31, 15, 12], [23, 31, 15, 12], [41, 31, 15, 12]] },
];

function Layouts() {
  return (
    <div className="mt-px grid w-[344px] grid-cols-4">
      {layouts.map((l, i) => (
        <div key={i} className={'flex h-[66px] w-[86px] border-2 pt-[7px] pl-[10px] ' + (l.sel ? 'border-[#111110]' : 'border-[#42413a]')}>
          <svg viewBox="0 0 61 47" className="h-[47px] w-[61px]" fill="none">
            <rect x=".5" y=".5" width="60" height="46" fill="#fff" stroke="#8b8c8b" /><rect x="2" y="2" width="57" height="43" fill="url(#gSheet)" />
            {!l.none && <><rect x="5.500" y="4.500" width="50" height="8" stroke="#cfcfce" fill="#fff" /><rect x="10" y="7" width="41" height="3" fill="#729fcf" /></>}
            {l.mid && <rect x="18" y="25" width="25" height="2" fill="#729fcf" />}
            {l.center && <><rect x="17" y="20" width="27" height="2" fill="#729fcf" /><rect x="22" y="25" width="17" height="2" fill="#729fcf" /></>}
            {(l.b || []).map(([x, y, w, h], j) => <rect key={j} x={x + 0.5} y={y + 0.5} width={w - 1} height={h - 1} stroke="#c8c8c7" />)}
          </svg>
        </div>
      ))}
    </div>
  );
}

function Sidebar() {
  return (
    <div className="flex flex-1 border-t border-[#aaa9a7]">
      <div className="flex w-[7px] flex-col justify-center border-l border-r border-[#aaa9a7]">
        <div className="mb-[2px] flex h-[73px] items-center justify-center bg-[#96938e]"><svg viewBox="0 0 5 8" className="h-2 w-[5px]"><path d="M0 0v8l5-4z" fill="#f2f1ef" /></svg></div>
      </div>
      <div className="ml-[4px] mt-[3px] flex h-[582px] w-[346px] flex-col border border-[#dddcda] text-[14px] text-[#4c4a46]">
        <div className="flex h-[26px] items-center pl-[10px] pr-[4px]"><T w={76} className="font-bold text-[#3c3b37]">Properties</T><Close className="ml-auto mt-[5px] size-[9px]" /></div>
        <Section label="Slide" w={36}><svg viewBox="0 0 11 10" className="ml-auto mt-[4px] h-[10px] w-[11px]"><rect x=".5" y=".5" width="10" height="9" fill="#fff" stroke="#3465a4" /><rect x="0" y="0" width="11" height="3" fill="#4f86c6" /><path d="M3 6.500h5.500" stroke="#555" strokeDasharray="1 1" /></svg></Section>
        <Select label="Format:" value="Screen 4:3" lw={54} vw={69} m="mt-[8px]" />
        <Select label="Orientation:" value="Landscape" lw={85} vw={73} m="mt-[8px]" />
        <Select label="Background:" value="None" lw={87} vw={37} m="mt-[8px]" />
        <Button m="mt-[8px]"><T w={85}>Insert Image</T></Button>
        <Select label="Master Slide:" value="Alizarin" lw={88} vw={51} m="mt-[8px]" />
        <Check label="Master Background" w={133} m="mt-[9px]" />
        <Check label="Master Objects" w={103} m="mt-[12px]" />
        <Button m="mt-[10px] mb-[8px]"><svg viewBox="0 0 16 12" className="h-3 w-4"><rect x=".5" y=".5" width="15" height="11" fill="#4a7fc1" stroke="#204a87" /><path d="M3 3.500h10M3 5.500h10M3 7.500h7M3 9.500h6" stroke="#e6effa" strokeWidth=".8" /></svg><T w={84}>Master View</T></Button>
        <Section label="Layouts" w={57} />
        <Layouts />
      </div>
      <div className="flex flex-1 flex-col items-center pt-[15px]">
        <Svg className="h-[10px] w-[10px]" vb="0 0 10 10"><path d="M0 1.500h7M0 3.500h7M0 5.500h5" stroke="#3d4a66" /><path d="M4 6h6L7 9.500z" fill="#16213a" /></Svg>
        <div className="mt-[13px] h-px w-[22px] bg-[#dddcda]" />
        <div className="mt-[3px] flex size-8 items-center justify-center rounded-[3px] border border-[#b9b8b5]"><Svg>{icons.wrench}</Svg></div>
        <Svg className="mt-[7px] size-6">{icons.trans}</Svg>
        <Svg className="mt-[11px] size-6">{icons.anim}</Svg>
        <Svg className="mt-[10px] size-6">{icons.master}</Svg>
        <Svg className="mt-[13px] size-6">{icons.styles}</Svg>
        <Svg className="mt-[10px] size-6">{icons.gallery}</Svg>
        <Svg className="mt-[11px] size-6">{icons.nav}</Svg>
      </div>
    </div>
  );
}

const V = ({ m }) => <div className={'h-4 w-px shrink-0 bg-[#8f8d89] ' + m} />;

function StatusBar() {
  return (
    <div className="flex h-[21px] items-center border-t border-[#aaa9a7] pt-px text-[12px] text-[#4c4a46]">
      <T w={61} className="ml-[10px]">Slide 7 of 7</T><V m="ml-[4px]" />
      <V m="ml-[312px]" /><T w={40} className="ml-[8px]">Alizarin</T><V m="ml-[59px]" />
      <Svg className="ml-[10px] h-[11px] w-[14px]" vb="0 0 14 11"><path d="M0 4.500h7M3.500 0v8" stroke="#1a1ad0" strokeDasharray="2 1" /><path d="M4 4.500h9.500v6H4z" stroke="#111" strokeDasharray="1 1" /></Svg>
      <T w={59} className="ml-[6px]">4.73 / 1.90</T>
      <Svg className="ml-[124px] h-[14px] w-[14px]" vb="0 0 14 14"><path d="M4.500 5.500h8v7h-8z" stroke="#111" strokeDasharray="1 1" /><path d="M5 2.500h8M1.500 6v7" stroke="#111" strokeDasharray="2 1" /><path d="M4.500 1v3M12.500 1v3M0 5.500h3M0 12.500h3" stroke="#111" /></Svg>
      <T w={59} className="ml-[6px]">0.00 x 0.00</T>
      <V m="ml-[120px]" />
      <Svg className="ml-[7px] h-[11px] w-3" vb="0 0 12 11"><path d="M9 2V.5H.5v10H9V9" stroke="#777" /><path d="M8.500 3v6M6 4.500l5 3M11 4.500l-5 3" stroke="#c01" strokeWidth="1.200" /></Svg>
      <V m="ml-[2px]" /><V m="ml-[28px]" /><T w={72} className="ml-[31px]">English (USA)</T><V m="ml-[28px]" />
      <Svg className="ml-[5px] size-[13px]" vb="0 0 13 13"><path d="M6.500 1v11M1 6.500h11" stroke="#111" strokeWidth="1.400" /><path d="M6.500 0L9 3H4zM6.500 13L9 10H4zM0 6.500L3 4v5zM13 6.500L10 4v5z" fill="#111" /></Svg>
      <V m="ml-[3px]" />
      <div className="ml-[10px] h-[2px] w-[8px] bg-[#8f8d89]" />
      <Svg className="ml-[6px] h-[10px] w-[97px]" vb="0 0 97 10"><path d="M0 5h97" stroke="#aaa9a7" strokeWidth="1.600" /><path d="M47.500 0v10" stroke="#aaa9a7" strokeWidth="1.500" /><circle cx="29" cy="5" r="3.700" fill="#fff" stroke="#777" /></Svg>
      <Svg className="ml-[6px] size-2" vb="0 0 8 8"><path d="M0 4h8M4 0v8" stroke="#8f8d89" strokeWidth="1.600" /></Svg>
      <V m="ml-[7px]" /><T w={24} className="ml-[8px]">63%</T>
    </div>
  );
}

const Defs = () => (
  <svg className="absolute size-0">
    <defs>
      <linearGradient id="gBlue" x1="0" y1="0" x2="0" y2="1"><stop offset="0" stopColor="#94b8e3" /><stop offset="1" stopColor="#5a8bc9" /></linearGradient>
      <linearGradient id="gSun" x1="0" y1="0" x2="0" y2="1"><stop offset="0" stopColor="#6c5b52" /><stop offset="1" stopColor="#ff9d1c" /></linearGradient>
      <linearGradient id="gSky" x1="0" y1="0" x2="0" y2="1"><stop offset="0" stopColor="#5f93c6" /><stop offset="1" stopColor="#f2a53c" /></linearGradient>
      <linearGradient id="gPurple" x1="0" y1="0" x2="1" y2="0"><stop offset="0" stopColor="#5c2a68" /><stop offset="1" stopColor="#b79bbd" /></linearGradient>
      <linearGradient id="gFox" x1="1" y1="0" x2="0.2" y2="1"><stop offset="0" stopColor="#ffe13d" /><stop offset=".5" stopColor="#ff6b2c" /><stop offset="1" stopColor="#ef1470" /></linearGradient>
      <linearGradient id="gGrey" x1="0" y1="0" x2="0" y2="1"><stop offset="0" stopColor="#c9c9c7" /><stop offset="1" stopColor="#8c8c8a" /></linearGradient>
      <linearGradient id="gOrange" x1="0" y1="0" x2="1" y2="1"><stop offset="0" stopColor="#e79150" /><stop offset=".6" stopColor="#ee6f34" /><stop offset="1" stopColor="#ec6230" /></linearGradient>
      <linearGradient id="gSheet" x1="0" y1="0" x2="0" y2="1"><stop offset="0" stopColor="#fff" /><stop offset="1" stopColor="#ebebeb" /></linearGradient>
    </defs>
  </svg>
);

export default function App() {
  return (
    <div className="relative flex h-[768px] w-[1366px] flex-col overflow-hidden bg-[#f2f1ef] font-[Noto_Sans,sans-serif]">
      <Defs />
      <TopBar />
      <div className="flex h-[741px]">
        <Dock />
        <div className="flex w-[1299px] flex-col">
          <TitleAndMenu />
          <div className="flex h-[38px] items-center">{row1.map(([k, m], i) => <Item key={i} k={k} m={m} />)}</div>
          <div className="flex h-[40px] items-center">{row2.map(([k, m], i) => <Item key={i} k={k} m={m} />)}</div>
          <div className="flex h-[590px]">
            <SlidePane />
            <Canvas />
            <Sidebar />
          </div>
          <StatusBar />
        </div>
      </div>
    </div>
  );
}
